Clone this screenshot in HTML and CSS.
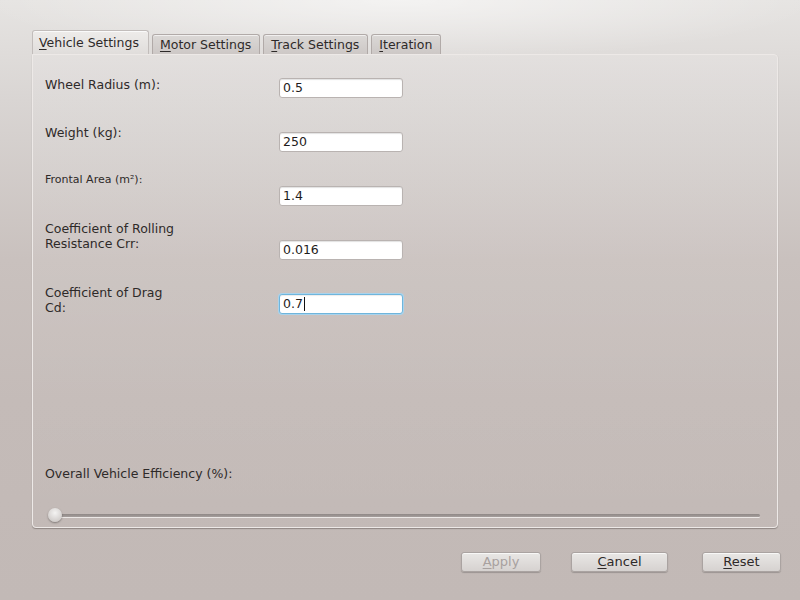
FILE: index.html
```html
<!DOCTYPE html>
<html>
<head>
<meta charset="utf-8">
<link rel="stylesheet" href="styles.css">
</head>
<body>
<div class="window">
  <div class="tabs">
    <div class="tab active"><u>V</u>ehicle Settings</div>
    <div class="tab"><u>M</u>otor Settings</div>
    <div class="tab"><u>T</u>rack Settings</div>
    <div class="tab"><u>I</u>teration</div>
  </div>
  <div class="panel">
    <div class="form">
      <div class="row">
        <div class="label l1">Wheel Radius (m):</div>
        <div class="field">0.5</div>
      </div>
      <div class="row">
        <div class="label l2">Weight (kg):</div>
        <div class="field">250</div>
      </div>
      <div class="row">
        <div class="label small l3">Frontal Area (m²):</div>
        <div class="field">1.4</div>
      </div>
      <div class="row">
        <div class="label l4">Coefficient of Rolling<br>Resistance Crr:</div>
        <div class="field">0.016</div>
      </div>
      <div class="row">
        <div class="label l5">Coefficient of Drag<br>Cd:</div>
        <div class="field focus">0.7<span class="caret"></span></div>
      </div>
    </div>
    <div class="spacer"></div>
    <div class="label eff">Overall Vehicle Efficiency (%):</div>
    <div class="slider">
      <div class="groove"></div>
      <div class="handle"></div>
    </div>
  </div>
  <div class="buttons">
    <div class="btn apply"><u>A</u>pply</div>
    <div class="btn cancel"><u>C</u>ancel</div>
    <div class="btn reset"><u>R</u>eset</div>
  </div>
</div>
</body>
</html>
```

FILE: styles.css
```css
html, body {
  margin: 0;
  padding: 0;
  width: 800px;
  height: 600px;
  overflow: hidden;
}
body {
  font-family: "DejaVu Sans", sans-serif;
  font-size: 12.5px;
  color: #2e2a29;
  background:
    radial-gradient(ellipse 420px 60px at 400px 0px, rgba(255,255,255,0.55), rgba(255,255,255,0) 100%),
    linear-gradient(to bottom, #e6e4e2 0px, #d9d5d3 100px, #c9c1be 260px, #c4bbb8 400px, #c2b9b6 600px);
}
.window {
  padding: 31px 22px 0 32px;
  display: flex;
  flex-direction: column;
}
.tabs {
  display: flex;
  align-items: flex-end;
  gap: 3px;
  height: 23px;
  position: relative;
  z-index: 2;
}
.tab {
  height: 19px;
  line-height: 19px;
  padding: 0 8px 0 7px;
  border: 1px solid #b1aaa8;
  border-bottom: none;
  border-radius: 3px 3px 0 0;
  background: linear-gradient(to bottom, #dbd8d6, #cdc8c6);
  box-shadow: inset 0 1px 0 rgba(255,255,255,0.6);
  color: #2e2a29;
  white-space: nowrap;
}
.tab.active {
  height: 23px;
  line-height: 24px;
  padding: 0 9px 0 6px;
  background: linear-gradient(to bottom, #eeecea, #e0dddb);
  border-color: #c2bdbb;
  box-shadow: inset 0 1px 0 #fafafa;
}
.tab u { text-decoration-thickness: 1px; text-underline-offset: 2px; }
.panel {
  width: 746px;
  border: 1px solid #ede9e7;
  border-radius: 0 4px 4px 4px;
  box-shadow: 0 1px 1px rgba(80,70,68,0.45);
  background: linear-gradient(to bottom, rgba(255,255,255,0.12), rgba(255,255,255,0));
  padding: 0 0 0 12px;
  display: flex;
  flex-direction: column;
  box-sizing: border-box;
  height: 474px;
}
.form {
  padding-top: 9px;
}
.row {
  display: flex;
  height: 54px;
}
.label {
  width: 234px;
  line-height: 15px;
  color: #2e2a29;
}
.label.small { font-size: 11px; line-height: 12px; }
.l1 { margin-top: 13px; }
.l2 { margin-top: 7px; }
.l3 { margin-top: 2px; }
.l4 { margin-top: -5px; }
.l5 { margin-top: 5px; }
.field {
  margin-top: 14px;
  height: 18px;
  line-height: 18px;
  border: 1px solid #b9b3b1;
  border-radius: 3px;
  background: #ffffff;
  box-shadow: inset 0 1px 1px rgba(0,0,0,0.12);
  padding-left: 3px;
  box-sizing: content-box;
  width: 119px;
  font-size: 12.5px;
  color: #1f1c1b;
}
.field.focus {
  border-color: #6fb5dc;
  box-shadow: 0 0 0 1px #a9d3ec, inset 0 1px 1px rgba(0,0,0,0.08);
}
.caret {
  display: inline-block;
  width: 1px;
  height: 14px;
  background: #111;
  vertical-align: -3px;
  margin-left: 1px;
}
.spacer { flex: 1; }
.label.eff {
  width: auto;
  margin-bottom: 29px;
}
.slider {
  position: relative;
  height: 14px;
  margin: 0 17px 3px 3px;
}
.groove {
  position: absolute;
  left: 4px;
  right: 0;
  top: 4px;
  height: 3px;
  border-radius: 2px;
  background: linear-gradient(to bottom, #8f8886, #a59e9c);
  box-shadow: 0 1px 0 #ece8e6;
}
.handle {
  position: absolute;
  left: 0;
  top: -2px;
  width: 14px;
  height: 14px;
  border-radius: 50%;
  background: radial-gradient(circle at 50% 35%, #f4f3f2, #d3cfcd 70%, #bdb7b5);
  box-shadow: 0 1px 2px rgba(0,0,0,0.35);
}
.buttons {
  display: flex;
  justify-content: flex-end;
  margin-top: 24px;
  margin-right: -3px;
}
.btn {
  height: 18px;
  line-height: 18px;
  text-align: center;
  border: 1px solid #aaa3a1;
  border-radius: 3px;
  background: linear-gradient(to bottom, #e9e7e5, #d6d2d0);
  box-shadow: 0 1px 1px rgba(0,0,0,0.2), inset 0 1px 0 rgba(255,255,255,0.7);
  color: #2e2a29;
  font-size: 13px;
}
.apply { width: 78px; color: #a8a19f; }
.cancel { width: 95px; margin-left: 30px; }
.reset { width: 77px; margin-left: 34px; }
.btn u { text-underline-offset: 2px; }
```
